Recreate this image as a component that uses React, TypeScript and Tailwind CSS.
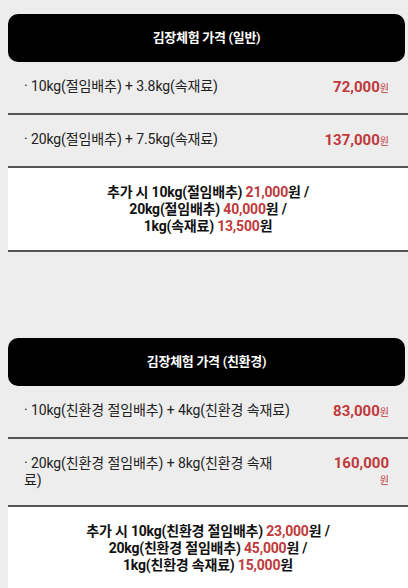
import React from 'react';

const font = { fontFamily: 'Roboto, "Noto Sans CJK KR", sans-serif' };

function Won({ value }: { value: string }) {
  return (
    <span className="text-[#c0393b]">
      <span className="text-[15px] font-bold">{value}</span>
      <span className="text-[10px]">원</span>
    </span>
  );
}

function Row({ label, price }: { label: React.ReactNode; price: React.ReactNode }) {
  return (
    <div className="flex items-start justify-between border-b-2 border-[#555] py-4 pl-4 pr-[19px]">
      <div className="text-[14px] leading-[17px] tracking-[-0.1px] text-[#222]">{label}</div>
      <div className="shrink-0 text-right leading-[17px]">{price}</div>
    </div>
  );
}

function Extra({ children }: { children: React.ReactNode }) {
  return (
    <div className="border-b-2 border-[#555] bg-white px-4 pt-4 pb-[15px] text-center text-[14px] font-bold leading-[17px] tracking-[-0.2px] text-[#111]">
      {children}
    </div>
  );
}

function Header({ title }: { title: string }) {
  return (
    <div className="mr-[3px] flex h-12 items-center justify-center rounded-[10px] bg-black text-[13px] font-semibold tracking-[-0.3px] text-white">
      {title}
    </div>
  );
}

const R = ({ children }: { children: React.ReactNode }) => (
  <span className="text-[#c0393b]">{children}</span>
);

export default function App() {
  return (
    <div className="min-h-[588px] bg-[#ededed] pl-2 pt-[14px]" style={font}>
      <Header title="김장체험 가격 (일반)" />
      <Row label="· 10kg(절임배추) + 3.8kg(속재료)" price={<Won value="72,000" />} />
      <Row label="· 20kg(절임배추) + 7.5kg(속재료)" price={<Won value="137,000" />} />
      <Extra>
        추가 시 10kg(절임배추) <R>21,000</R>원 /<br />
        20kg(절임배추) <R>40,000</R>원 /<br />
        1kg(속재료) <R>13,500</R>원
      </Extra>

      <div className="h-[86px]" />

      <Header title="김장체험 가격 (친환경)" />
      <Row label="· 10kg(친환경 절임배추) + 4kg(친환경 속재료)" price={<Won value="83,000" />} />
      <Row
        label={
          <>
            · 20kg(친환경 절임배추) + 8kg(친환경 속재<br />료)
          </>
        }
        price={
          <span className="text-[#c0393b]">
            <span className="block text-[15px] font-bold">160,000</span>
            <span className="block text-[10px]">원</span>
          </span>
        }
      />
      <Extra>
        추가 시 10kg(친환경 절임배추) <R>23,000</R>원 /<br />
        20kg(친환경 절임배추) <R>45,000</R>원 /<br />
        1kg(친환경 속재료) <R>15,000</R>원
      </Extra>
    </div>
  );
}
